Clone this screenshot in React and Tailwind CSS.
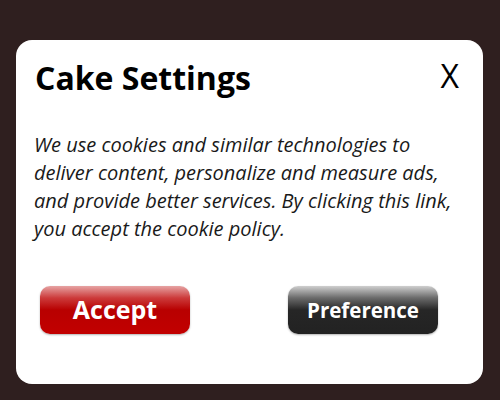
import React from 'react';

export default function App() {
  return (
    <div className="w-[500px] h-[400px] bg-[#2f1f1f] pt-10 pl-4 font-['Open_Sans',sans-serif]">
      <div className="w-[467px] h-[344px] bg-white rounded-2xl flex flex-col">
        <div className="flex items-center justify-between pt-[18px] pl-[19px] pr-[24px]">
          <h2 className="text-[32px] font-bold text-black leading-10">Cake Settings</h2>
          <button className="text-[32px] font-normal text-black leading-10 -mt-[4px]">X</button>
        </div>
        <p className="mt-[33px] pl-[18px] italic text-[20px] leading-[28px] text-[#1a1a1a] w-[450px]">
          We use cookies and similar technologies to deliver content, personalize and measure ads, and provide better services. By clicking this link, you accept the cookie policy.
        </p>
        <div className="flex mt-[43px] pl-[24px] gap-[98px]">
          <button className="w-[150px] h-[48px] rounded-[10px] text-white font-bold text-[25px] bg-[linear-gradient(to_bottom,#e6a3a3_0%,#cc3a3a_25%,#b80000_50%,#c20000_100%)] shadow-[0_1px_2px_rgba(0,0,0,0.3)]">
            Accept
          </button>
          <button className="w-[150px] h-[48px] rounded-[10px] text-white font-bold text-[20.5px] bg-[linear-gradient(to_bottom,#cfcfcf_0%,#6a6a6a_25%,#262626_50%,#222222_100%)] shadow-[0_1px_2px_rgba(0,0,0,0.3)]">
            Preference
          </button>
        </div>
      </div>
    </div>
  );
}
